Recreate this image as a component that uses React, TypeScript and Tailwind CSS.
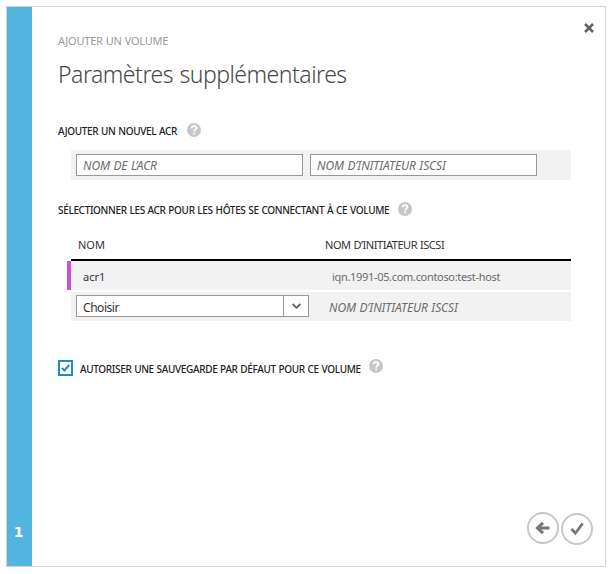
import React from "react";

function Help() {
  return (
    <svg className="h-[14px] w-[14px] shrink-0" viewBox="0 0 14 14" fill="none">
      <circle cx="7" cy="7" r="7" fill="#c7c7c7" />
      <path d="M4.500 5.300C4.600 3.800 5.600 3.100 7 3.100c1.500 0 2.500.75 2.500 2C9.500 6.700 7.200 6.600 7.200 8.500" stroke="#fff" strokeWidth="1.800" />
      <rect x="6.200" y="9.500" width="1.900" height="1.800" fill="#fff" />
    </svg>
  );
}

function Label({ text, className }: { text: string; className: string }) {
  return (
    <span className={`text-[10px] leading-[14px] font-medium tracking-[-0.34px] [word-spacing:0.5px] whitespace-nowrap text-[#222] ${className}`}>
      {text}
    </span>
  );
}

export default function App() {
  return (
    <div className="h-[574px] w-[614px] overflow-hidden bg-white pt-[6px] pl-[6px] font-['Noto_Sans','Open_Sans',sans-serif]">
      <div className="flex h-[561px] w-[600px] border border-[#d3d3d3] bg-white">
        <aside className="flex w-[25px] shrink-0 items-end justify-center bg-[#52b5e0] pr-[2px] pb-[24px] font-['DejaVu_Sans','Noto_Sans',sans-serif] text-[14px] leading-[20px] font-bold text-white">
          1
        </aside>
        <main className="flex min-w-0 grow flex-col pl-[26px]">
          <header className="flex h-[45px] justify-between pr-[11px]">
            <span className="mt-[26px] text-[11px] leading-[16px] tracking-[-0.24px] [word-spacing:0.5px] whitespace-nowrap text-[#999]">AJOUTER UN VOLUME</span>
            <svg className="mt-[16px] h-[10px] w-[10px]" viewBox="0 0 10 10" fill="none">
              <path d="M1 1L9 9M9 1L1 9" stroke="#606060" strokeWidth="2.500" />
            </svg>
          </header>
          <h1 className="mt-[6px] h-[33px] text-[23px] leading-[32px] font-light tracking-[-0.5px] [word-spacing:1px] whitespace-nowrap text-[#484848]">
            Paramètres supplémentaires
          </h1>
          <div className="mt-[32px] flex h-[18px] gap-[9px]">
            <Label text="AJOUTER UN NOUVEL ACR" className="mt-[1px] w-[120px]" />
            <Help />
          </div>
          <div className="mt-[9px] ml-[13px] flex h-[30px] w-[500px] gap-[7px] bg-[#f2f2f2] pt-[4px] pl-[5px]">
            <input
              className="h-[22px] w-[227px] border border-[#999] bg-white px-[6px] text-[12px] leading-[20px] tracking-[-0.1px] [word-spacing:0.5px] italic placeholder:text-[#6b6b6b]"
              placeholder="NOM DE L’ACR"
            />
            <input
              className="h-[22px] w-[227px] border border-[#999] bg-white px-[6px] text-[12px] leading-[20px] tracking-[-0.1px] [word-spacing:0.5px] italic placeholder:text-[#6b6b6b]"
              placeholder="NOM D’INITIATEUR ISCSI"
            />
          </div>
          <div className="mt-[22px] flex h-[18px] gap-[9px]">
            <Label text="SÉLECTIONNER LES ACR POUR LES HÔTES SE CONNECTANT À CE VOLUME" className="mt-[1px] w-[331px]" />
            <Help />
          </div>
          <section className="mt-[15px] ml-[9px] w-[504px]">
            <div className="ml-[4px] flex h-[26px] border-b-2 border-black pl-[7px] text-[11px] leading-[20px] text-[#333]">
              <span className="w-[247px]">NOM</span>
              <span className="tracking-[-0.45px] [word-spacing:0.5px]">NOM D’INITIATEUR ISCSI</span>
            </div>
            <div className="flex h-[29px] border-l-4 border-[#c552d9] bg-[#f2f2f2] pl-[12px] text-[11px] leading-[31px]">
              <span className="w-[249px] text-[#333]">acr1</span>
              <span className="tracking-[-0.32px] text-[#6b6b6b]">iqn.1991-05.com.contoso:test-host</span>
            </div>
            <div className="mt-[2px] ml-[4px] flex h-[29px] bg-[#f2f2f2] pt-[3px] pl-[5px]">
              <button className="flex h-[22px] w-[233px] border border-[#999] bg-white">
                <span className="w-[206px] pl-[6px] text-left text-[12px] leading-[24px] tracking-[-0.45px] text-[#333]">Choisir</span>
                <span className="flex h-full grow items-center justify-center border-l border-[#999]">
                  <svg className="h-[6px] w-[9px]" viewBox="0 0 9 6" fill="none">
                    <path d="M.7 1l3.800 3.800L8.300 1" stroke="#606060" strokeWidth="1.800" />
                  </svg>
                </span>
              </button>
              <span className="ml-[20px] text-[12px] leading-[26px] tracking-[-0.1px] [word-spacing:0.5px] whitespace-nowrap text-[#6b6b6b] italic">
                NOM D’INITIATEUR ISCSI
              </span>
            </div>
          </section>
          <div className="mt-[38px] flex h-[17px]">
            <span className="mt-px flex h-[16px] w-[15px] items-center justify-center border-2 border-[#2389c4]">
              <svg className="h-[8px] w-[9px]" viewBox="0 0 9 8" fill="none">
                <path d="M.8 3.900l2.600 2.600L8.200 1" stroke="#2389c4" strokeWidth="2" />
              </svg>
            </span>
            <Label text="AUTORISER UNE SAUVEGARDE PAR DÉFAUT POUR CE VOLUME" className="mt-[3px] mr-[8px] ml-[7px] w-[281px]" />
            <Help />
          </div>
          <footer className="mt-auto mb-[22px] flex justify-end gap-[2px] pr-[12px]">
            <svg className="h-[32px] w-[32px]" viewBox="0 0 32 32" fill="none">
              <circle cx="16" cy="16" r="15" stroke="#c8c8c8" strokeWidth="2" />
              <path d="M22.500 16H11M16 10.800L10.500 16L16 21.200" stroke="#777" strokeWidth="3" />
            </svg>
            <svg className="mt-px -mb-px h-[32px] w-[32px]" viewBox="0 0 32 32" fill="none">
              <circle cx="16" cy="16" r="15" stroke="#c8c8c8" strokeWidth="2" />
              <path d="M10.500 16l3.900 4.200L21.700 10.400" stroke="#777" strokeWidth="2.700" />
            </svg>
          </footer>
        </main>
      </div>
    </div>
  );
}
